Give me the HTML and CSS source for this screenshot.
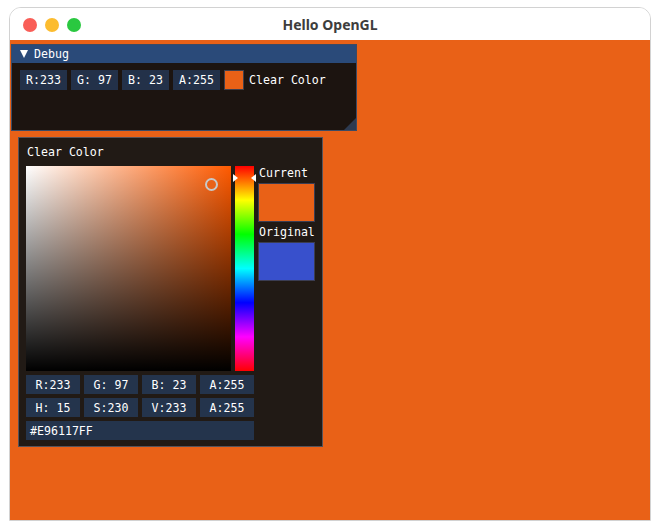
FILE: index.html
```html
<!DOCTYPE html>
<html>
<head>
<meta charset="utf-8">
<title>Hello OpenGL</title>
<link rel="stylesheet" href="styles.css">
</head>
<body>
<div class="app">
  <div class="titlebar">
    <div class="lights">
      <span class="light red"></span>
      <span class="light yellow"></span>
      <span class="light green"></span>
    </div>
    <div class="title">Hello OpenGL</div>
  </div>
  <div class="canvas">
    <div class="imwin debug">
      <div class="imtitle"><span class="arrow"></span><span>Debug</span></div>
      <div class="debug-body">
        <div class="frame dbg">R:233</div>
        <div class="frame dbg">G: 97</div>
        <div class="frame dbg">B: 23</div>
        <div class="frame dbg">A:255</div>
        <div class="swatch small"></div>
        <span class="label">Clear Color</span>
      </div>
      <div class="grip"></div>
    </div>

    <div class="imwin popup">
      <div class="popup-title">Clear Color</div>
      <div class="picker">
        <div class="sv">
          <div class="sv-dark"></div>
          <div class="cursor"></div>
        </div>
        <div class="hue">
          <span class="tri left"></span>
          <span class="tri right"></span>
        </div>
        <div class="side">
          <div class="side-label">Current</div>
          <div class="swatch big current"></div>
          <div class="side-label second">Original</div>
          <div class="swatch big original"></div>
        </div>
      </div>
      <div class="grid">
        <div class="frame pop">R:233</div>
        <div class="frame pop">G: 97</div>
        <div class="frame pop">B: 23</div>
        <div class="frame pop">A:255</div>
        <div class="frame pop">H: 15</div>
        <div class="frame pop">S:230</div>
        <div class="frame pop">V:233</div>
        <div class="frame pop">A:255</div>
        <div class="frame pop hex">#E96117FF</div>
      </div>
    </div>
  </div>
</div>
</body>
</html>
```

FILE: styles.css
```css
* { box-sizing: border-box; }

html, body {
  margin: 0;
  padding: 0;
  background: #ffffff;
}

body {
  padding: 7px 0 0 9px;
}

.app {
  width: 642px;
  border: 1px solid #d2d2d2;
  border-radius: 12px 12px 0 0;
  overflow: hidden;
  background: #ffffff;
}

.titlebar {
  height: 32px;
  position: relative;
  display: flex;
  align-items: center;
  background: #ffffff;
}

.lights {
  display: flex;
  gap: 8px;
  padding-left: 13px;
  padding-top: 1px;
}

.light {
  width: 14px;
  height: 14px;
  border-radius: 50%;
  display: block;
}
.light.red { background: #f95e57; }
.light.yellow { background: #fcbc2f; }
.light.green { background: #2ac840; }

.title {
  position: absolute;
  left: 0;
  right: 0;
  top: 0;
  bottom: 0;
  display: flex;
  align-items: center;
  justify-content: center;
  font-family: "Noto Sans", "Open Sans", sans-serif;
  font-weight: 700;
  font-size: 14px;
  color: #3d3d3d;
  padding-top: 1px;
}

.canvas {
  position: relative;
  height: 480px;
  background: #e96117;
  font-family: "DejaVu Sans Mono", "Liberation Mono", monospace;
  font-size: 11.6px;
  color: #ffffff;
}

.imwin {
  position: absolute;
  border: 1px solid #4b4b58;
}

/* Debug window */
.debug {
  left: 1px;
  top: 4px;
  width: 346px;
  height: 87px;
  background: #1c1410;
  border-color: #3c4a63;
}

.imtitle {
  height: 18px;
  background: #2a4a79;
  display: flex;
  align-items: center;
  padding-left: 8px;
}

.arrow {
  width: 0;
  height: 0;
  border-left: 4.5px solid transparent;
  border-right: 4.5px solid transparent;
  border-top: 8px solid #ffffff;
  margin-right: 6px;
}

.debug-body {
  display: flex;
  align-items: center;
  gap: 4px;
  padding: 7px 8px 0 8px;
}

.frame {
  height: 20px;
  display: flex;
  align-items: center;
  justify-content: center;
  white-space: pre;
}

.frame.dbg {
  width: 47px;
  background: #233149;
}

.swatch {
  background: #e96117;
  border: 1px solid #3f3f4c;
}

.swatch.small {
  width: 20px;
  height: 20px;
}

.label {
  margin-left: 1px;
}

.grip {
  position: absolute;
  right: 0;
  bottom: 0;
  width: 12px;
  height: 12px;
  background: #2d3a50;
  clip-path: polygon(100% 0, 100% 100%, 0 100%);
}

/* Picker popup */
.popup {
  left: 8px;
  top: 97px;
  width: 305px;
  height: 310px;
  background: #211a15;
  border-color: #56535b;
  padding: 7px 7px 0 7px;
}

.popup-title {
  height: 14px;
  line-height: 14px;
  margin-left: 1px;
}

.picker {
  display: flex;
  gap: 4px;
  margin-top: 7px;
}

.sv {
  position: relative;
  width: 205px;
  height: 205px;
  background: linear-gradient(to right, #ffffff, rgb(255, 90, 0));
}

.sv-dark {
  position: absolute;
  inset: 0;
  background: linear-gradient(to bottom, rgba(0, 0, 0, 0), #000000);
}

.cursor {
  position: absolute;
  left: 179px;
  top: 12px;
  width: 13px;
  height: 13px;
  border-radius: 50%;
  border: 2px solid #c8c8c8;
  background: #e96117;
}

.hue {
  position: relative;
  width: 19px;
  height: 205px;
  background: linear-gradient(to bottom,
    #ff0000 0%, #ffff00 16.67%, #00ff00 33.33%, #00ffff 50%,
    #0000ff 66.67%, #ff00ff 83.33%, #ff0000 100%);
}

.tri {
  position: absolute;
  top: 8px;
  width: 0;
  height: 0;
  border-top: 4px solid transparent;
  border-bottom: 4px solid transparent;
}
.tri.left {
  left: -2px;
  border-left: 5px solid #ffffff;
}
.tri.right {
  right: -2px;
  border-right: 5px solid #ffffff;
}

.side {
  display: flex;
  flex-direction: column;
  padding-top: 0;
}

.side-label {
  height: 14px;
  line-height: 14px;
  margin-left: 1px;
}

.side-label.second {
  margin-top: 3px;
}

.swatch.big {
  width: 57px;
  height: 39px;
  margin-top: 3px;
  border-color: #3b3d52;
}

.swatch.original {
  background: #3850cc;
  margin-top: 3px;
}

.grid {
  display: grid;
  grid-template-columns: repeat(4, 54px);
  gap: 4px;
  margin-top: 4px;
}

.frame.pop {
  height: 19px;
  background: #24344c;
}

.frame.hex {
  grid-column: 1 / 5;
  justify-content: flex-start;
  padding-left: 4px;
}
```
